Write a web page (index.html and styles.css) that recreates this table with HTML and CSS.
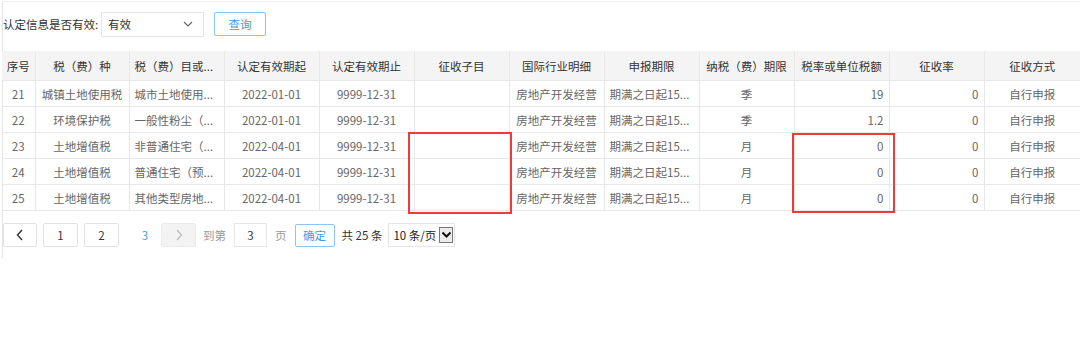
FILE: index.html
```html
<!DOCTYPE html>
<html lang="zh">
<head>
<meta charset="utf-8">
<link rel="stylesheet" href="styles.css">
</head>
<body>
<div class="panel">
  <div class="filter">
    <span class="label">认定信息是否有效:</span>
    <div class="select">
      <span>有效</span>
      <svg width="10" height="6" viewBox="0 0 10 6"><path d="M1 1 L5 5 L9 1" fill="none" stroke="#666" stroke-width="1.2"/></svg>
    </div>
    <button class="btn-query">查询</button>
  </div>

  <div class="table-wrap">
    <table class="grid">
      <colgroup>
        <col class="c-seq"><col class="c94"><col class="c95"><col class="c95"><col class="c95"><col class="c95"><col class="c95"><col class="c95"><col class="c95"><col class="c95"><col class="c95"><col class="c96">
      </colgroup>
      <thead>
        <tr>
          <th>序号</th><th>税（费）种</th><th class="trunc">税（费）目或...</th><th>认定有效期起</th><th>认定有效期止</th><th>征收子目</th><th>国际行业明细</th><th>申报期限</th><th>纳税（费）期限</th><th>税率或单位税额</th><th>征收率</th><th>征收方式</th>
        </tr>
      </thead>
      <tbody>
        <tr><td>21</td><td>城镇土地使用税</td><td class="trunc">城市土地使用...</td><td>2022-01-01</td><td>9999-12-31</td><td></td><td>房地产开发经营</td><td class="trunc">期满之日起15...</td><td>季</td><td class="num">19</td><td class="num">0</td><td>自行申报</td></tr>
        <tr><td>22</td><td>环境保护税</td><td class="trunc">一般性粉尘（...</td><td>2022-01-01</td><td>9999-12-31</td><td></td><td>房地产开发经营</td><td class="trunc">期满之日起15...</td><td>季</td><td class="num">1.2</td><td class="num">0</td><td>自行申报</td></tr>
        <tr><td>23</td><td>土地增值税</td><td class="trunc">非普通住宅（...</td><td>2022-04-01</td><td>9999-12-31</td><td></td><td>房地产开发经营</td><td class="trunc">期满之日起15...</td><td>月</td><td class="num">0</td><td class="num">0</td><td>自行申报</td></tr>
        <tr><td>24</td><td>土地增值税</td><td class="trunc">普通住宅（预...</td><td>2022-04-01</td><td>9999-12-31</td><td></td><td>房地产开发经营</td><td class="trunc">期满之日起15...</td><td>月</td><td class="num">0</td><td class="num">0</td><td>自行申报</td></tr>
        <tr><td>25</td><td>土地增值税</td><td class="trunc">其他类型房地...</td><td>2022-04-01</td><td>9999-12-31</td><td></td><td>房地产开发经营</td><td class="trunc">期满之日起15...</td><td>月</td><td class="num">0</td><td class="num">0</td><td>自行申报</td></tr>
      </tbody>
    </table>
    <div class="mark mark-a"></div>
    <div class="mark mark-b"></div>
  </div>

  <div class="pager">
    <span class="pg-btn"><svg width="8" height="12" viewBox="0 0 8 12"><path d="M6 1 L1.5 6 L6 11" fill="none" stroke="#333" stroke-width="1.4"/></svg></span>
    <span class="pg-btn">1</span>
    <span class="pg-btn">2</span>
    <span class="pg-cur">3</span>
    <span class="pg-btn pg-disabled"><svg width="8" height="12" viewBox="0 0 8 12"><path d="M2 1 L6.5 6 L2 11" fill="none" stroke="#bbb" stroke-width="1.2"/></svg></span>
    <span class="pg-text">到第</span>
    <span class="pg-input">3</span>
    <span class="pg-text">页</span>
    <button class="pg-ok">确定</button>
    <span class="pg-total">共 25 条</span>
    <span class="pg-size">10 条/页<span class="pg-arrow"><svg width="11" height="8" viewBox="0 0 11 8"><path d="M1.5 1.5 L5.5 5.5 L9.5 1.5" fill="none" stroke="#111" stroke-width="2"/></svg></span></span>
  </div>
</div>
</body>
</html>
```

FILE: styles.css
```css
html, body {
  margin: 0;
  padding: 0;
  background: #fff;
}
body {
  font-family: "Noto Sans CJK SC", "Noto Sans", sans-serif;
  font-size: 11px;
  color: #666;
}
.panel {
  margin-top: 1px;
  margin-left: 2px;
  border-top: 1px solid #eeeeee;
  border-left: 1px solid #e4e4e4;
  height: 256px;
  width: 1078px;
}
.filter {
  display: flex;
  align-items: center;
  height: 24px;
  margin-top: 10px;
}
.label {
  color: #333;
  font-size: 11.5px;
  width: 98px;
}
.select {
  box-sizing: border-box;
  width: 103px;
  height: 25px;
  border: 1px solid #e6e6e6;
  display: flex;
  align-items: center;
  justify-content: space-between;
  padding: 0 10px 0 6px;
  color: #333;
  font-size: 11.5px;
}
.btn-query {
  box-sizing: border-box;
  margin-left: 10px;
  width: 52px;
  height: 24px;
  border: 1px solid #8cc4f2;
  border-radius: 2px;
  background: #fff;
  color: #3d9be9;
  font-family: inherit;
  font-size: 11.5px;
  padding: 0;
}
.table-wrap {
  position: relative;
  margin-top: 15px;
  margin-left: -1px;
}
.grid {
  border-collapse: collapse;
  table-layout: fixed;
  width: 1078px;
}
.c-seq { width: 33px; }
.c94 { width: 94px; }
.c95 { width: 95px; }
.c96 { width: 96px; }
.grid th, .grid td {
  border: 1px solid #e8e8e8;
  text-align: center;
  white-space: nowrap;
  overflow: hidden;
  padding: 0 4px;
  font-weight: normal;
}
.grid th {
  height: 29px;
  background: #f4f4f4;
  color: #333;
  font-size: 11.5px;
  border-top: none;
}
.grid td {
  height: 25px;
  color: #666;
  font-size: 11.5px;
}
.grid tr > :first-child { border-left: none; }
.grid tr > :last-child { border-right: none; }
.grid .trunc { text-align: left; padding-left: 5px; }
.grid .num { text-align: right; padding-right: 5px; }
.mark {
  position: absolute;
  border: 2px solid #f03a3a;
  box-sizing: border-box;
}
.mark-a { left: 406px; top: 81px; width: 104px; height: 82px; }
.mark-b { left: 790px; top: 82px; width: 103px; height: 80px; }
.pager {
  display: flex;
  align-items: center;
  margin-top: 12px;
  height: 24px;
}
.pg-btn {
  box-sizing: border-box;
  height: 24px;
  width: 35px;
  border: 1px solid #e2e2e2;
  border-radius: 2px;
  display: flex;
  align-items: center;
  justify-content: center;
  color: #333;
  font-size: 11.5px;
  margin-right: 6px;
  background: #fff;
}
.pg-btn:first-child { width: 34px; margin-right: 6px; }
.pg-cur {
  color: #3d9be9;
  width: 36px;
  padding-left: 4px;
  box-sizing: border-box;
  text-align: center;
  font-size: 11.5px;
}
.pg-disabled { background: #f3f3f3; border-color: #eaeaea; }
.pg-text {
  color: #999;
  font-size: 11.5px;
  margin: 0 8px 0 1px;
}
.pg-input {
  box-sizing: border-box;
  width: 33px;
  height: 24px;
  border: 1px solid #e6e6e6;
  display: flex;
  align-items: center;
  justify-content: center;
  color: #333;
  font-size: 11.5px;
  margin-right: 7px;
}
.pg-ok {
  box-sizing: border-box;
  width: 40px;
  height: 23px;
  border: 1px solid #8cc4f2;
  border-radius: 2px;
  background: #fff;
  color: #3d9be9;
  font-family: inherit;
  font-size: 11.5px;
  padding: 0;
  margin-left: 0;
  margin-right: 7px;
}
.pg-total {
  color: #333;
  font-size: 11.5px;
  margin-right: 6px;
}
.pg-size {
  box-sizing: border-box;
  height: 24px;
  width: 67px;
  border: 1px solid #e6e6e6;
  display: flex;
  align-items: center;
  padding-left: 4px;
  color: #222;
  font-size: 11.5px;
  position: relative;
}
.pg-arrow {
  position: absolute;
  right: 1px;
  top: 3px;
  width: 14px;
  height: 16px;
  box-sizing: border-box;
  border: 1px solid #777;
  background: #ececec;
  display: flex;
  align-items: center;
  justify-content: center;
}
```
